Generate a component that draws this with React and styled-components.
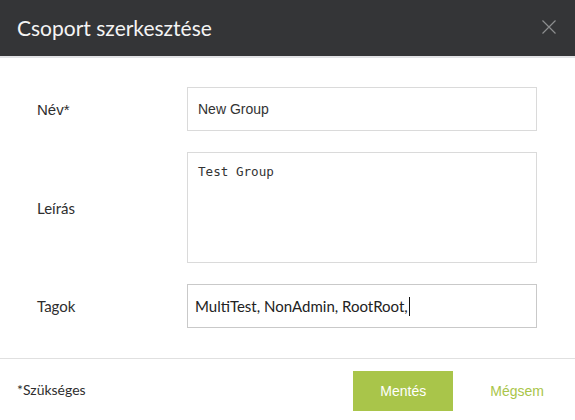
import React from 'react';
import styled, { createGlobalStyle } from 'styled-components';

const GlobalStyle = createGlobalStyle`
  html, body {
    margin: 0;
    padding: 0;
    background: #ffffff;
  }
  * {
    box-sizing: border-box;
  }
`;

const Dialog = styled.div`
  width: 575px;
  height: 420px;
  background: #ffffff;
  display: flex;
  flex-direction: column;
  font-family: Lato, "Liberation Sans", sans-serif;
  color: #333333;
`;

const Header = styled.div`
  height: 58px;
  background: #343537;
  border-bottom: 2px solid #e2e3e5;
  display: flex;
  align-items: center;
  justify-content: space-between;
  padding: 0 18px 2px 17px;
`;

const Title = styled.h1`
  margin: 0;
  font-size: 21px;
  font-weight: 400;
  color: #f4f4f4;
`;

const CloseButton = styled.button`
  border: 0;
  background: none;
  padding: 0;
  width: 16px;
  height: 16px;
  display: flex;
  cursor: pointer;
`;

const Form = styled.div`
  display: grid;
  grid-template-columns: 150px 350px;
  row-gap: 21px;
  align-items: center;
  padding: 29px 38px 30px 37px;
  border-bottom: 1px solid #e0e0e0;
`;

const Label = styled.label`
  font-family: ${p => (p.$arial ? '"Liberation Sans", Arial, sans-serif' : 'Lato, sans-serif')};
  font-size: 15px;
  color: #2e2e2e;
`;

const TextInput = styled.input`
  height: 44px;
  width: 100%;
  border: 1px solid #dadada;
  padding: 0 10px;
  font-family: "Liberation Sans", Arial, sans-serif;
  font-size: 14px;
  color: #333333;
  outline: none;
`;

const TextArea = styled.textarea`
  display: block;
  width: 100%;
  height: 111px;
  border: 1px solid #dadada;
  padding: 10px 10px;
  font-family: "DejaVu Sans Mono", monospace;
  font-size: 12.6px;
  line-height: 17px;
  color: #333333;
  resize: none;
  outline: none;
`;

const TagsBox = styled.div`
  height: 44px;
  border: 1px solid #c9c9c9;
  padding: 0 7px;
  display: flex;
  align-items: center;
  font-family: Lato, sans-serif;
  font-size: 15px;
  color: #222222;
`;

const Caret = styled.span`
  display: inline-block;
  width: 1px;
  height: 19px;
  background: #111111;
  margin-left: 1px;
`;

const Footer = styled.div`
  flex: 1;
  display: flex;
  align-items: center;
  padding-left: 17px;
`;

const Required = styled.span`
  font-family: Lato, sans-serif;
  font-size: 14px;
  color: #2e2e2e;
  margin-right: auto;
`;

const Button = styled.button`
  height: 40px;
  border: 0;
  font-family: "Liberation Sans", Arial, sans-serif;
  font-size: 14px;
  cursor: pointer;
  background: ${p => (p.$primary ? '#a9c54a' : 'transparent')};
  color: ${p => (p.$primary ? '#ffffff' : '#a9c54a')};
  width: ${p => (p.$primary ? '100px' : 'auto')};
  padding: ${p => (p.$primary ? '0' : '0 31px 0 37px')};
  margin-top: 2px;
`;

export default function App() {
  return (
    <>
      <GlobalStyle />
      <Dialog>
        <Header>
          <Title>Csoport szerkesztése</Title>
          <CloseButton aria-label="Bezárás">
            <svg width="16" height="16" viewBox="0 0 16 16">
              <path d="M1.5 1.5 L14.5 14.5 M14.5 1.5 L1.5 14.5" stroke="#8c8d8f" strokeWidth="1.2" fill="none" />
            </svg>
          </CloseButton>
        </Header>
        <Form>
          <Label $arial>Név*</Label>
          <TextInput defaultValue="New Group" />
          <Label>Leírás</Label>
          <TextArea defaultValue="Test Group" />
          <Label>Tagok</Label>
          <TagsBox>
            MultiTest, NonAdmin, RootRoot,<Caret />
          </TagsBox>
        </Form>
        <Footer>
          <Required>*Szükséges</Required>
          <Button $primary>Mentés</Button>
          <Button>Mégsem</Button>
        </Footer>
      </Dialog>
    </>
  );
}
